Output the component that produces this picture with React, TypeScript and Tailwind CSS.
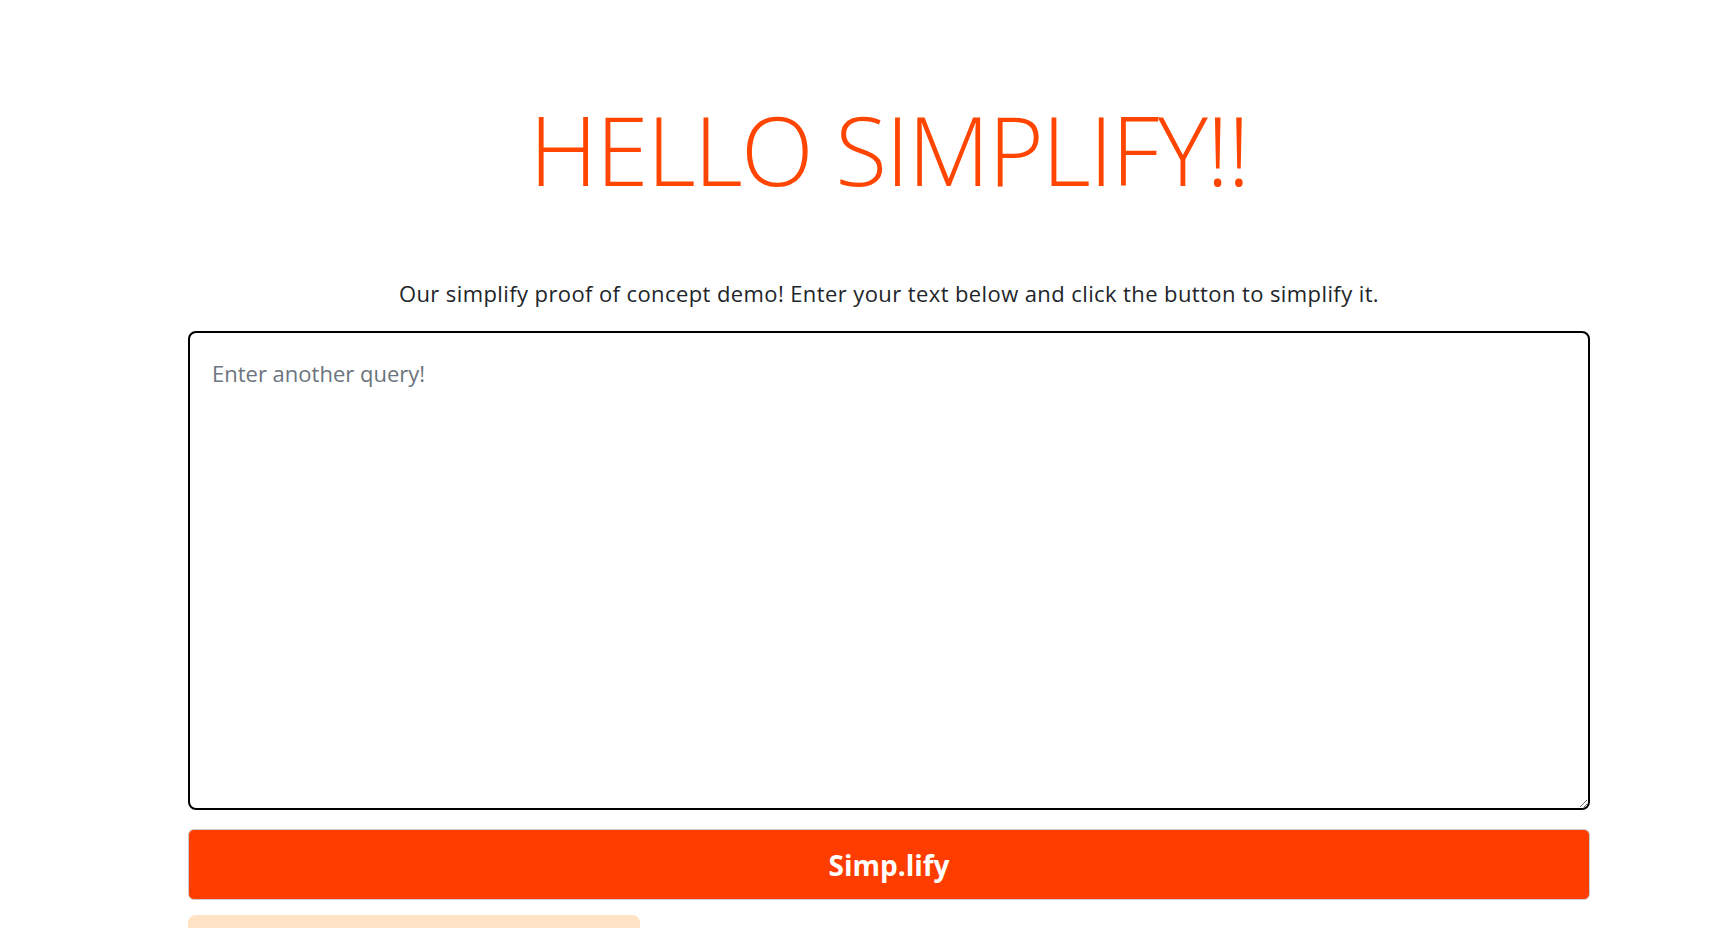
import React from "react";

const App = () => {
  return (
    <div className="min-h-screen bg-white font-['Open_Sans',sans-serif] pl-[46px]">
      <div className="flex flex-col items-center">
        <h1 className="mt-[102px] text-[95px] leading-[95px] font-light tracking-[-1.6px] text-[#ff4500]">
          HELLO SIMPLIFY!!
        </h1>
        <p className="mt-[81px] text-[22px] leading-[30px] tracking-[0.4px] text-[#212529]">
          Our simplify proof of concept demo! Enter your text below and click the button to simplify it.
        </p>
        <textarea
          placeholder="Enter another query!"
          autoFocus
          className="mt-[23px] w-[1402px] h-[479px] rounded-[8px] border-2 border-black px-[22px] py-[25px] text-[22px] leading-[30px] text-[#212529] placeholder:text-[#6c757d] outline-none"
        />
        <button className="mt-[19px] w-[1402px] h-[71px] rounded-[6px] bg-[#ff3d00] text-white text-[28px] font-bold border border-[#ccc]">
          Simp.lify
        </button>
        <div className="mt-[15px] w-[1402px]">
          <div className="w-[452px] h-[40px] rounded-[8px] bg-[#ffe3c4]" />
        </div>
      </div>
    </div>
  );
};

export default App;
